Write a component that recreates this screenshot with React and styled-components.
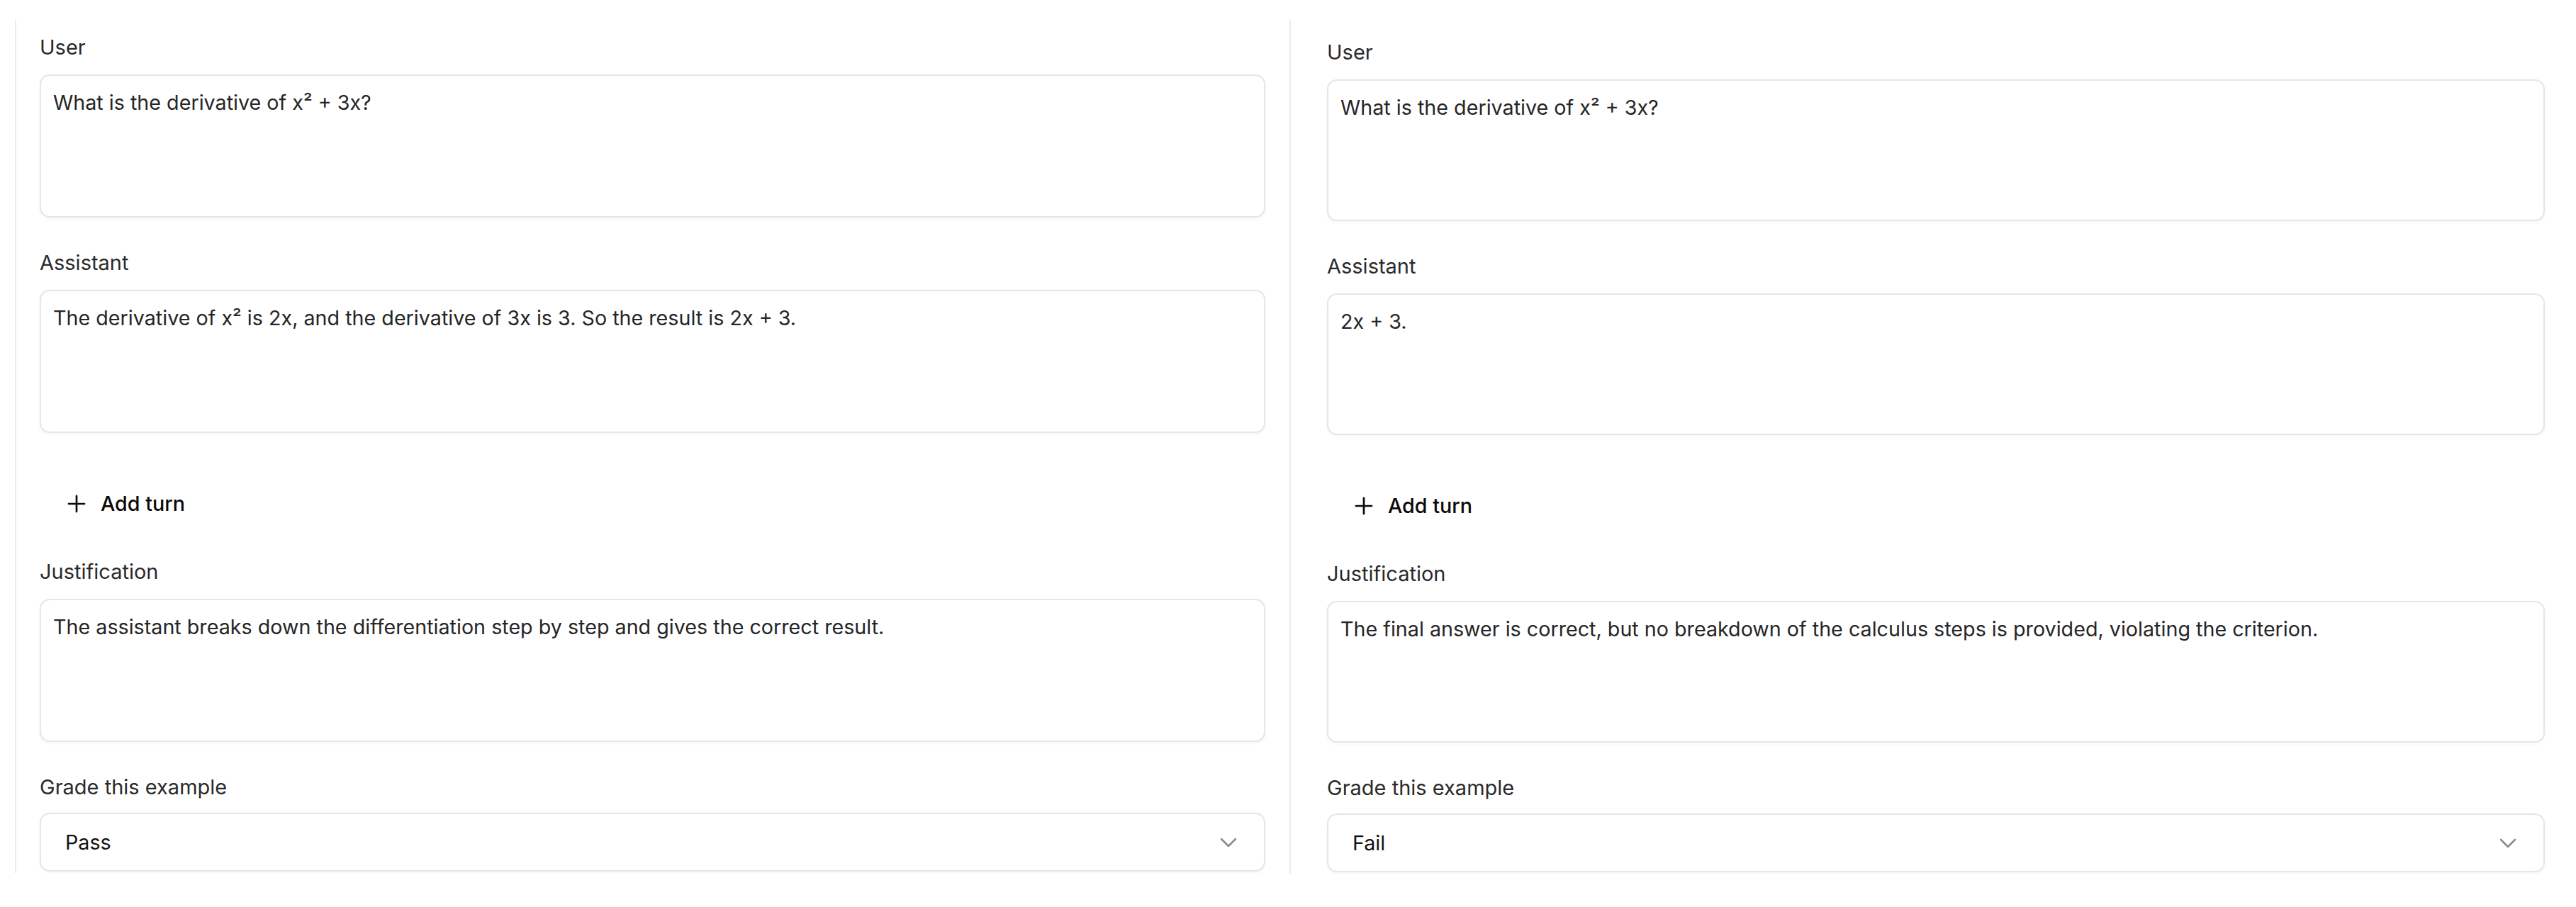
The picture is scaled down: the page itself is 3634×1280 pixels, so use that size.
import React from 'react'
import styled, { createGlobalStyle } from 'styled-components'
import { Plus, ChevronDown } from 'lucide-react'

const GlobalStyle = createGlobalStyle`
  html, body {
    margin: 0;
    background: #ffffff;
  }
  body {
    font-family: Inter, "Noto Sans", sans-serif;
    -webkit-font-smoothing: antialiased;
  }
  * {
    box-sizing: border-box;
  }
`

const examples = [
  {
    user: 'What is the derivative of x² + 3x?',
    assistant: 'The derivative of x² is 2x, and the derivative of 3x is 3. So the result is 2x + 3.',
    justification: 'The assistant breaks down the differentiation step by step and gives the correct result.',
    grade: 'Pass',
  },
  {
    user: 'What is the derivative of x² + 3x?',
    assistant: '2x + 3.',
    justification: 'The final answer is correct, but no breakdown of the calculus steps is provided, violating the criterion.',
    grade: 'Fail',
  },
]

const ExampleColumn = ({ example, index }) => {
  const second = index > 0
  return (
    <Column $second={second}>
      <Field>
        <Label>User</Label>
        <TextBox $short={second}>{example.user}</TextBox>
      </Field>
      <Field $spaced>
        <Label>Assistant</Label>
        <TextBox $short={second}>{example.assistant}</TextBox>
      </Field>
      <AddTurn type="button">
        <Plus size={38} strokeWidth={1.7} />
        Add turn
      </AddTurn>
      <Field $after>
        <Label>Justification</Label>
        <TextBox $short={second}>{example.justification}</TextBox>
      </Field>
      <Field $spaced $tight>
        <Label>Grade this example</Label>
        <Select>
          <span>{example.grade}</span>
          <ChevronDown size={40} strokeWidth={1.5} color="#8a8a8a" />
        </Select>
      </Field>
    </Column>
  )
}

const App = () => {
  return (
    <>
      <GlobalStyle />
      <Page>
        {examples.map((example, i) => (
          <ExampleColumn key={i} example={example} index={i} />
        ))}
      </Page>
    </>
  )
}

const Page = styled.div`
  display: grid;
  grid-template-columns: 1798px 1fr;
  align-items: start;
  padding: 28px 44px 0 21px;
`

const Column = styled.div`
  display: flex;
  flex-direction: column;
  border-left: 2px solid #ebebeb;
  padding: ${(p) => (p.$second ? '26px 0 2px 51px' : '19px 34px 2px 33px')};
`

const Field = styled.div`
  display: flex;
  flex-direction: column;
  gap: ${(p) => (p.$tight ? '16px' : '18px')};
  margin-top: ${(p) => (p.$spaced ? '44px' : p.$after ? '36px' : '0')};
`

const Label = styled.div`
  font-size: 29px;
  line-height: 40px;
  color: #2a2a2a;
`

const TextBox = styled.div`
  height: ${(p) => (p.$short ? '200px' : '202px')};
  padding: 17px;
  border: 2px solid #e6e6e6;
  border-radius: 14px;
  box-shadow: 0 2px 4px rgba(0, 0, 0, 0.04);
  background: #ffffff;
  font-size: 28.7px;
  line-height: 41px;
  color: #262626;
`

const AddTurn = styled.button`
  align-self: flex-start;
  display: inline-flex;
  align-items: center;
  gap: 15px;
  margin-top: 59px;
  padding: 20px 33px;
  border: none;
  border-radius: 12px;
  background: transparent;
  font-family: inherit;
  font-size: 28.7px;
  font-weight: 500;
  line-height: 41px;
  color: #0a0a0a;
  cursor: pointer;
`

const Select = styled.div`
  display: flex;
  align-items: center;
  justify-content: space-between;
  height: 83px;
  padding: 0 30px 0 34px;
  border: 2px solid #e6e6e6;
  border-radius: 14px;
  box-shadow: 0 2px 4px rgba(0, 0, 0, 0.04);
  font-size: 28.7px;
  line-height: 41px;
  color: #141414;
`

export default App
